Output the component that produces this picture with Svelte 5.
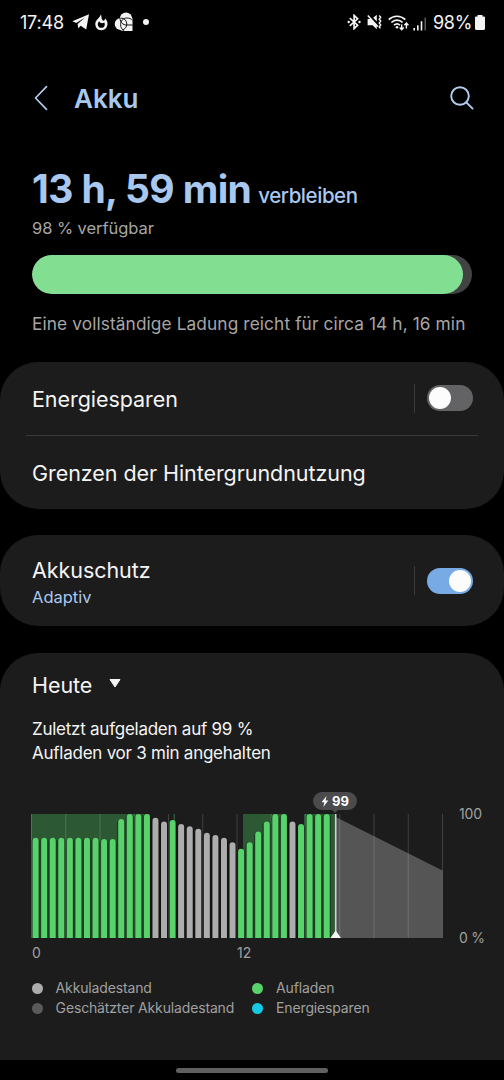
<script lang="ts">
  type Kind = 'level' | 'charging'

  interface Bar {
    top: number
    kind: Kind
  }

  let energySaving = $state(false)
  let protection = $state(true)

  // Chart area in px: 24 hours, one bar per half hour
  const WIDTH = 411
  const HEIGHT = 124
  const STEP = WIDTH / 48
  const NOW = 304.7

  const c = (top: number): Bar => ({ top, kind: 'charging' })
  const l = (top: number): Bar => ({ top, kind: 'level' })

  const bars: Bar[] = [
    c(23.7), c(23.7), c(23.7), c(23.7), c(23.7), c(23.7), c(23.7), c(23.7),
    c(25), c(25), c(5), c(0), c(0), c(0),
    l(3.8), l(7.5), c(6), l(10), l(12.3), l(14.8), l(18.8), l(21), l(23.8), l(28.3),
    c(34.8), c(28.3), c(17.5), c(7.5), c(0), c(0),
    l(7.5), c(10), c(0), c(0), c(0),
  ]

  const bands = [
    { x: 0, width: 119 },
    { x: 142.6, width: 1.4 },
    { x: 212, width: 44 },
    { x: 273, width: 31 },
  ]

  const gridLines = Array.from({ length: 13 }, (_, i) => (i * WIDTH) / 12)

  function barPath(i: number, top: number, w = 6): string {
    const x = 4.6 + i * STEP - w / 2
    const r = w / 2
    return `M${x} ${HEIGHT}V${top + r}a${r} ${r} 0 0 1 ${w} 0V${HEIGHT}z`
  }

  const legend = [
    { label: 'Akkuladestand', color: 'level' },
    { label: 'Aufladen', color: 'charging' },
    { label: 'Geschätzter Akkuladestand', color: 'estimate' },
    { label: 'Energiesparen', color: 'saving' },
  ]
</script>

{#snippet toggle(on: boolean, label: string, flip: () => void)}
  <div class="switch-wrap">
    <button class="switch" class:on role="switch" aria-checked={on} aria-label={label} onclick={flip}>
      <span class="knob"></span>
    </button>
  </div>
{/snippet}

<div class="screen">
  <div class="status">
    <span class="clock">17:48</span>
    <svg class="telegram" width="18" height="16" viewBox="0 0 18 16">
      <path d="M.3 7.300 17 .2 14.200 15.600 8.700 11.800 6.300 14.200 5.600 9.900 13 3.600 4.300 8.900z" fill="#f4f4f4" />
    </svg>
    <svg class="flame" width="13" height="17" viewBox="0 0 13 17">
      <path d="M5.800.6c1 1.200.4 3.300 1.200 5 .5 1.200 2 1.500 2.800.2.200-.5.2-1 .1-1.500 1.600 1.400 2.600 3.300 2.600 5.400 0 3.700-2.600 6.500-6.200 6.500S.3 13.500.3 10c0-2.500 1.300-3.900 2.700-5.300C4.200 3.500 5.300 2.400 5.800.6z" fill="#f4f4f4" />
      <path d="M4.200 7.200c-.9 1-1.400 2-1.400 3.200 0 2 1.500 3.400 3.500 3.400s3.500-1.400 3.500-3.400c0-.8-.2-1.400-.5-2C7.500 9.700 5 9.300 4.200 7.200z" fill="#000" />
    </svg>
    <svg class="shapes" width="20" height="20" viewBox="0 0 20 20">
      <g fill="#f4f4f4">
        <circle cx="12" cy="6.600" r="6.100" />
        <circle cx="6.800" cy="12" r="6.100" />
        <path d="M7 6h11.500v13H10c-4 0-5-2-5-6z" />
      </g>
      <g fill="none" stroke="#151515" stroke-width="1">
        <path d="M6 6c.2 4.500 3 7 6.500 7h6.200M6.800 6c3.600.2 6 2.600 6 6 0 3-2 5.500-5 6.200M18.500 8.200C17 6.600 15 6 12.600 6 9 6 6.600 9 6.600 12.500c0 2.700 1.200 5 3.500 6.200" />
      </g>
    </svg>
    <span class="dot"></span>
    <span class="spacer"></span>
    <svg class="bluetooth" width="14" height="16" viewBox="0 0 14 16">
      <path d="m2.800 4.200 7.800 7L7.100 14.600V1.400l3.500 3.400-7.800 7" fill="none" stroke="#f4f4f4" stroke-width="1.700" />
      <circle cx="1.700" cy="8" r="1.200" fill="#f4f4f4" />
      <circle cx="12.500" cy="8" r="1.200" fill="#f4f4f4" />
    </svg>
    <svg class="mute" width="15" height="16" viewBox="0 0 15 16">
      <path d="M.6 5h3.200l6 6.300v4L5.600 11.300H.6zM9.800.8v6.600L6.200 3.800z" fill="#f4f4f4" />
      <path d="m.8 1.500 10 11" stroke="#f4f4f4" stroke-width="1.500" />
      <path d="m12.200 1.500 1.500 1.800-1.500 1.900 1.500 1.900-1.500 1.900 1.500 1.900-1.500 1.800 1.200 1.600" fill="none" stroke="#f4f4f4" stroke-width="1.400" />
    </svg>
    <svg class="wifi" width="21" height="17" viewBox="0 0 21 17">
      <g fill="none" stroke="#f4f4f4" stroke-width="1.700">
        <path d="M.7 5.600a12 12 0 0 1 16.600 0M3.400 8.500a8 8 0 0 1 11.200 0M6 11.200a4.500 4.500 0 0 1 6 0" />
      </g>
      <circle cx="9" cy="13.200" r="1.300" fill="#f4f4f4" />
      <path d="M13.700 10.500v5m-2-2 2 2.200 2-2.200M18.400 14.500V9.200m-2 2 2-2.200 2 2.200" fill="none" stroke="#f4f4f4" stroke-width="1.400" />
    </svg>
    <svg class="signal" width="14" height="15" viewBox="0 0 14 15">
      <path d="M1.200 12v2.500M4.800 9.300v5.200M8.500 5.300v9.200" stroke="#f4f4f4" stroke-width="1.600" />
      <path d="M12.200 1.500v13" stroke="#555" stroke-width="1.600" />
    </svg>
    <span class="percent">98%</span>
    <svg class="battery" width="10" height="15" viewBox="0 0 10 15">
      <path d="M2.500 0h5v1.500H9a1 1 0 0 1 1 1V13.500a1.500 1.500 0 0 1-1.500 1.500h-7A1.500 1.500 0 0 1 0 13.500V2.500a1 1 0 0 1 1-1h1.500z" fill="#f4f4f4" />
    </svg>
  </div>

  <header>
    <button class="icon-btn" aria-label="Zurück">
      <svg width="14" height="26" viewBox="0 0 14 26">
        <path d="M12.500 1.700 1.500 13l11 11.300" fill="none" stroke="#b4cdef" stroke-width="1.700" stroke-linecap="round" stroke-linejoin="round" />
      </svg>
    </button>
    <h1>Akku</h1>
    <button class="icon-btn" aria-label="Suchen">
      <svg width="24" height="24" viewBox="0 0 24 24">
        <g fill="none" stroke="#b4cdef" stroke-width="1.900" stroke-linecap="round">
          <circle cx="10" cy="10" r="8.800" />
          <path d="m16.300 16.300 6.300 6.300" />
        </g>
      </svg>
    </button>
  </header>

  <section class="summary">
    <p class="remaining"><strong>13 h, 59 min</strong><span>verbleiben</span></p>
    <p class="available">98 % verfügbar</p>
    <div class="meter"><div class="fill" style="width: 98%"></div></div>
    <p class="full">Eine vollständige Ladung reicht für circa 14 h, 16 min</p>
  </section>

  <section class="card options">
    <div class="row">
      <span class="title">Energiesparen</span>
      {@render toggle(energySaving, 'Energiesparen', () => (energySaving = !energySaving))}
    </div>
    <hr />
    <div class="row">
      <span class="title">Grenzen der Hintergrundnutzung</span>
    </div>
  </section>

  <section class="card protect">
    <div class="labels">
      <div class="title">Akkuschutz</div>
      <div class="sub">Adaptiv</div>
    </div>
    {@render toggle(protection, 'Akkuschutz', () => (protection = !protection))}
  </section>

  <section class="card usage">
    <div class="day">
      <span class="title">Heute</span>
      <svg width="12" height="9" viewBox="0 0 12 9">
        <path d="M1 .5h10L6 8z" fill="#f4f4f4" stroke="#f4f4f4" stroke-linejoin="round" />
      </svg>
    </div>
    <p class="info">Zuletzt aufgeladen auf 99 %</p>
    <p class="info">Aufladen vor 3 min angehalten</p>

    <div class="chart">
      <div class="plot">
        <svg width="412" height="124" viewBox="0 0 412 124">
          {#each bands as band}
            <rect x={band.x} y="0" width={band.width} height={HEIGHT} fill="#2d5834" />
          {/each}
          {#each gridLines as x}
            <path d="M{x + 0.5} 0V124" stroke="#fff" stroke-opacity=".16" />
          {/each}
          <path d="M{NOW} 3 411.500 56.500V124H{NOW}z" fill="#fff" fill-opacity=".25" />
          {#each bars as bar, i}
            <path d={barPath(i, bar.top, STEP)} class="gutter" />
          {/each}
          {#each bars as bar, i}
            <path d={barPath(i, bar.top)} class={bar.kind} />
          {/each}
          <path d="M{NOW} 0V124" stroke="#d0d0d0" stroke-width="1.600" />
          <path d="M{NOW} 116.500l5.300 7.500h-10.600z" fill="#f4f4f4" />
        </svg>
        <div class="badge">
          <svg width="8" height="11" viewBox="0 0 8 11">
            <path d="M5.500 0 .6 6.200h2.700L2.300 11l5-6.400H4.500z" fill="#fff" />
          </svg>
          <span>99</span>
        </div>
      </div>
      <div class="y-axis"><span>100</span><span>0 %</span></div>
    </div>
    <div class="x-axis"><span>0</span><span>12</span></div>

    <ul class="legend">
      {#each legend as item}
        <li><i class={item.color}></i><span>{item.label}</span></li>
      {/each}
    </ul>
  </section>

  <div class="nav"><span></span></div>
</div>

<style>
  :global(body) {
    background: #000;
  }

  .screen {
    display: flex;
    flex-direction: column;
    width: 504px;
    height: 1080px;
    overflow: hidden;
    background: #000;
    color: #f4f4f4;
    font-family: Inter, Roboto, sans-serif;
  }

  p,
  h1,
  ul {
    margin: 0;
    padding: 0;
  }

  svg {
    display: block;
    flex: none;
  }

  button {
    padding: 0;
    border: none;
    background: none;
    cursor: pointer;
  }

  .status {
    display: flex;
    align-items: center;
    box-sizing: border-box;
    height: 44px;
    padding: 1px 19px 0 20px;
    font-size: 18px;
    white-space: nowrap;
  }

  .clock {
    width: 45px;
    letter-spacing: -0.2px;
  }

  .telegram {
    margin-left: 7px;
  }

  .flame {
    margin-left: 5px;
  }

  .shapes {
    margin-left: 6px;
  }

  .dot {
    width: 6px;
    height: 6px;
    margin-left: 9px;
    border-radius: 50%;
    background: #f4f4f4;
  }

  .spacer {
    flex: 1;
  }

  .mute {
    margin-left: 6px;
  }

  .wifi {
    margin-left: 6px;
  }

  .signal {
    margin: 2px 0 0 4px;
  }

  .percent {
    width: 39px;
    margin-left: 6px;
    letter-spacing: -0.3px;
  }

  .battery {
    margin-left: 3px;
  }

  header {
    display: flex;
    align-items: center;
    height: 108px;
    padding: 0 30px 0 34px;
  }

  h1 {
    flex: 1;
    margin-left: 26px;
    padding-top: 2px;
    color: #a9c8f0;
    font-size: 26px;
    font-weight: 600;
  }

  .summary {
    height: 210px;
    padding: 0 32px;
    color: #a6a6a6;
    white-space: nowrap;
  }

  .remaining {
    height: 64px;
    line-height: 74px;
    color: #a9c8f0;
  }

  .remaining strong {
    font-size: 39px;
    font-weight: 700;
    letter-spacing: -0.6px;
  }

  .remaining span {
    margin-left: 7px;
    font-size: 20.5px;
    font-weight: 500;
    letter-spacing: -0.45px;
  }

  .available {
    font-size: 16.5px;
    line-height: 24px;
    letter-spacing: -0.06px;
  }

  .meter {
    height: 39px;
    margin-top: 15px;
    border-radius: 20px;
    background: #424242;
    overflow: hidden;
  }

  .fill {
    height: 100%;
    border-radius: 20px;
    background: #82df91;
  }

  .full {
    margin-top: 18px;
    font-size: 17.3px;
    line-height: 24px;
    letter-spacing: 0.1px;
  }

  .card {
    flex: none;
    box-sizing: border-box;
    border-radius: 38px;
    background: #1c1c1c;
  }

  .title {
    font-size: 21.5px;
    line-height: 28px;
    letter-spacing: -0.06px;
    white-space: nowrap;
  }

  .options {
    height: 147px;
  }

  .row {
    display: flex;
    align-items: center;
    justify-content: space-between;
    height: 73px;
    padding: 0 31px 0 32px;
  }

  .row .title {
    padding-top: 1px;
  }

  hr {
    height: 1px;
    margin: 0 26px;
    border: none;
    background: #3b3b3b;
  }

  .summary + .options {
    margin-top: 0.6px;
  }

  .protect {
    display: flex;
    align-items: center;
    justify-content: space-between;
    height: 91px;
    margin-top: 26.4px;
    padding: 0 31px 0 32px;
  }

  .labels {
    padding-top: 4px;
  }

  .sub {
    color: #a9c8f0;
    font-size: 16.5px;
    line-height: 26px;
  }

  .switch-wrap {
    display: flex;
    align-items: center;
    height: 29px;
    padding-left: 12px;
    border-left: 1px solid #3b3b3b;
  }

  .switch {
    display: flex;
    align-items: center;
    box-sizing: border-box;
    width: 46px;
    height: 26px;
    padding: 0 2px;
    border-radius: 13px;
    background: #636366;
  }

  .switch.on {
    justify-content: flex-end;
    background: #78abe6;
  }

  .knob {
    width: 22px;
    height: 22px;
    border-radius: 50%;
    background: #fcfcfc;
  }

  .usage {
    height: 407px;
    margin-top: 27px;
    padding: 18px 0 0 31px;
    border-bottom-left-radius: 0;
    border-bottom-right-radius: 0;
  }

  .day {
    display: flex;
    align-items: center;
    gap: 17px;
    height: 28px;
    margin-bottom: 18px;
    padding-left: 1px;
  }

  .day svg {
    margin-bottom: 3px;
  }

  .info {
    padding-left: 1px;
    font-size: 17px;
    line-height: 24px;
    letter-spacing: -0.25px;
    white-space: nowrap;
  }

  .chart {
    display: flex;
    margin-top: 49px;
  }

  .plot {
    position: relative;
    width: 412px;
    height: 124px;
  }

  .gutter {
    fill: #000;
    fill-opacity: 0.3;
  }

  .level {
    fill: #adadad;
    background: #adadad;
  }

  .charging {
    fill: #58d36b;
    background: #58d36b;
  }

  .estimate {
    background: #5a5a5a;
  }

  .saving {
    background: #16c8e4;
  }

  .badge {
    position: absolute;
    top: -22px;
    left: 282px;
    display: flex;
    align-items: center;
    justify-content: center;
    gap: 3px;
    width: 44px;
    height: 18px;
    border-radius: 9px;
    background: #4b4b4d;
    color: #fff;
    font-size: 13px;
    font-weight: 700;
  }

  .badge::after {
    content: '';
    position: absolute;
    top: 18px;
    left: 19px;
    border: 3px solid transparent;
    border-top-color: #4b4b4d;
    border-bottom: none;
  }

  .y-axis {
    display: flex;
    flex-direction: column;
    justify-content: space-between;
    height: 142px;
    margin: -9px 0 -9px 16px;
    color: #a0a0a0;
    font-size: 14px;
    line-height: 18px;
    letter-spacing: -0.2px;
  }

  .x-axis {
    display: flex;
    height: 18px;
    margin-top: 6px;
    padding-left: 1px;
    color: #a0a0a0;
    font-size: 14px;
    line-height: 18px;
  }

  .x-axis span {
    width: 205px;
  }

  .legend {
    display: grid;
    grid-template-columns: 220.5px 1fr;
    margin-top: 16px;
    padding-left: 0.6px;
    color: #a0a0a0;
    font-size: 14px;
    line-height: 20px;
    letter-spacing: -0.15px;
    list-style: none;
    white-space: nowrap;
  }

  .legend li {
    display: flex;
    align-items: center;
  }

  .legend i {
    width: 11px;
    height: 11px;
    margin-right: 13px;
    border-radius: 50%;
  }

  .nav {
    display: flex;
    justify-content: center;
    height: 20px;
    padding-top: 8px;
    box-sizing: border-box;
  }

  .nav span {
    width: 152px;
    height: 5px;
    border-radius: 3px;
    background: #606060;
  }
</style>
